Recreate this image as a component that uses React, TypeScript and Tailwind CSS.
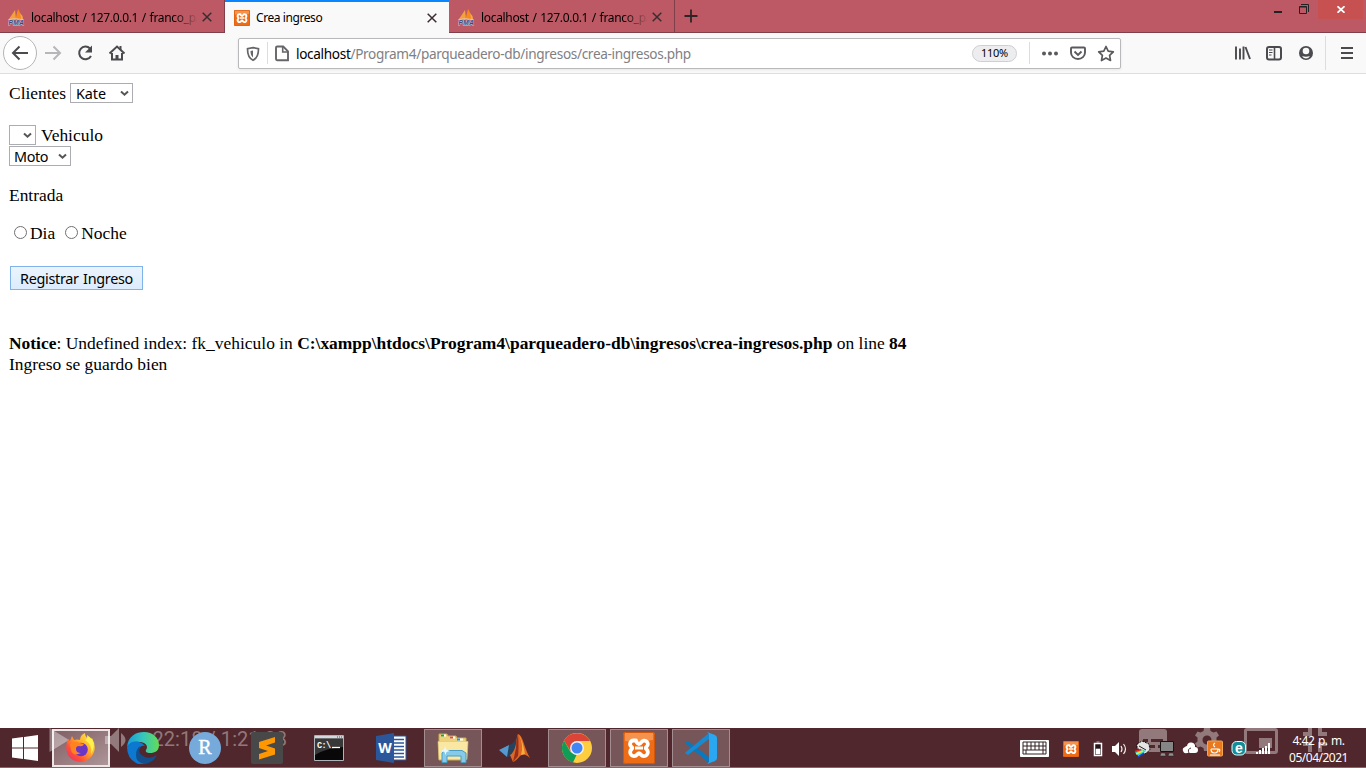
import React from "react";

const ui = "font-['Noto_Sans','Open_Sans',sans-serif]";

function Sail() {
  return (
    <svg width="17" height="18" viewBox="0 0 17 18" className="shrink-0">
      <path d="M1 11 7 2l1 9z" fill="#f5a040" />
      <path d="M7.500 11 10 1q3 4 3 10z" fill="#f88a18" />
      <path d="M12 5q3 2.500 3 6h-2z" fill="#f9a94c" />
      <path d="M.5 11.500q7-1.500 15 .2" stroke="#e9c9b4" fill="none" />
      <text x=".5" y="17" fontSize="6.500" fontWeight="bold" fontStyle="italic" textLength="15.500" fill="#3d4780" stroke="#cfc6d8" strokeWidth="1" paintOrder="stroke" fontFamily="Liberation Sans, sans-serif">PMA</text>
    </svg>
  );
}

function Xampp({ size }: { size: number }) {
  return (
    <svg width={size} height={size} viewBox="0 0 32 32" className="shrink-0">
      <rect width="32" height="32" rx="2.500" fill="#ef6c16" />
      <path d="M2 1h28v7q-14 3-28 1z" fill="#f4924e" />
      <rect x=".5" y=".5" width="31" height="31" rx="2" fill="none" stroke="#cf570b" />
      <path d="M13 8.500H10.500a3.500 3.500 0 0 0-2 6.300q1.500 1.200 0 2.500a3.900 3.900 0 1 0 5.500 5.500q2-3.500 4 0a3.900 3.900 0 1 0 5.500-5.500q-1.500-1.300 0-2.500a3.500 3.500 0 1 0-5-4.800q-2.500 4-5 0Q13 9 13 8.500z" fill="#ef6c16" stroke="#fff" strokeWidth="3.800" strokeLinejoin="round" />
      <path d="M12 16h8" stroke="#fff" strokeWidth="3" />
    </svg>
  );
}

function Close() {
  return (
    <svg width="10" height="10" viewBox="0 0 10 10" className="shrink-0">
      <path d="m.7.7 8.600 8.600M9.300.7.7 9.300" stroke="#3b2c31" strokeWidth="1.500" />
    </svg>
  );
}

function Tab({ title, active }: { title: string; active?: boolean }) {
  return (
    <div className={"flex h-[33px] shrink-0 items-center " + (active ? "w-[224px] border-t-2 border-[#0a84ff] bg-[#f9f9fa] pl-[9px]" : "w-[226px] border-r border-b border-[#80404a] pt-[2px] pl-[9px] first:w-[225px] first:pl-[8px]")}>
      {active ? <Xampp size={16} /> : <Sail />}
      <div className={"ml-[6px] w-[166px] overflow-hidden whitespace-nowrap text-[12px] leading-[18px] text-black " + (active ? "tracking-[-0.42px]" : "pt-px tracking-[-0.33px] [word-spacing:0.9px] [mask-image:linear-gradient(to_right,black_142px,transparent_167px)]")}>{title}</div>
      <span className="ml-[5px]"><Close /></span>
    </div>
  );
}

function TabBar() {
  return (
    <div className={"flex h-[33px] border-b border-[#80404a] bg-[#bc5964] " + ui}>
      <Tab title="localhost / 127.0.0.1 / franco_parqueadero" />
      <Tab title="Crea ingreso" active />
      <Tab title="localhost / 127.0.0.1 / franco_parqueadero" />
      <svg width="32" height="32" viewBox="0 0 32 32"><path d="M16 9.500v13M9.500 16h13" stroke="#2d2428" strokeWidth="1.800" /></svg>
      <div className="ml-auto flex">
        <svg width="53" height="20" viewBox="0 0 53 20" fill="none" stroke="#242124"><path d="M9 12h8" strokeWidth="2" /><path d="M34.500 6.500h7v7h-7zM34.500 7h7" /><path d="M36 4.500h7.500V12" /></svg>
        <div className="flex h-[19px] w-[45px] items-center justify-center bg-[#c75050]">
          <svg width="8" height="7" viewBox="0 0 8 7"><path d="m.5.2 7 6.600m0-6.600-7 6.600" stroke="#fff" strokeWidth="1.700" /></svg>
        </div>
        <span className="w-[3px]" />
      </div>
    </div>
  );
}

function Toolbar() {
  return (
    <div className={"flex h-[41px] items-center border-b border-[#dedee0] bg-[#f9f9fa] " + ui}>
      <svg width="238" height="40" viewBox="0 0 238 40" fill="none" stroke="#4b4b4f" strokeWidth="2">
        <circle cx="20" cy="20" r="16.500" fill="#fff" stroke="#b5b5b7" strokeWidth="1" />
        <path d="M28 20H13m6.500-6.500L13 20l6.500 6.500" />
        <path d="M45 20h15m-6.500-6.500L60 20l-6.500 6.500" stroke="#b7b7b9" />
        <path d="M90 15.500A6.300 6.300 0 1 0 91 23" /><path d="M92 12.500v7h-7z" fill="#4b4b4f" stroke="none" />
        <path d="m109.500 20.500 7.500-7 7.500 7" /><path d="M112 20v6.500h10V20" /><path d="M120.500 13v4" /><path d="M117 27v-5" strokeWidth="3" />
      </svg>
      <div className="flex h-[31px] w-[883px] items-center rounded-[2px] border border-[#b9b9bb] bg-white shadow-[0_1px_3px_rgba(0,0,0,0.08)]">
        <svg width="57" height="29" viewBox="0 0 57 29" fill="none" stroke="#66666a" strokeWidth="1.700">
          <path d="m14 8.600 5.500 1.100q0 9-5.500 11.500Q8.500 18.700 8.500 9.700z" /><path d="M14 11.500v7q-2.500-2-2.500-6.500z" fill="#66666a" stroke="none" />
          <path d="M28.500 3v22" stroke="#dddddf" strokeWidth="1" />
          <path d="M38.200 7.500h6l4.800 4.800v8.900H38.200q-1.200 0-1.200-1.200V8.700q0-1.200 1.200-1.200z" strokeWidth="1.900" /><path d="M43.700 8v5H49" strokeWidth="1.600" />
        </svg>
        <span className="whitespace-nowrap text-[13.6px] leading-[20px] tracking-[-0.33px] pt-[2px] text-[#808084]"><span className="text-black">localhost</span>/Program4/parqueadero-db/ingresos/crea-ingresos.php</span>
        <div className="ml-auto flex h-[17px] w-[45px] items-center justify-center rounded-full border border-[#cfcfd1] bg-[#ededef] pt-px text-[11px] tracking-[-0.3px] text-black">110%</div>
        <svg width="103" height="29" viewBox="0 0 103 29" fill="none" stroke="#5a5a5e" strokeWidth="1.900">
          <path d="M12.500 3v22" stroke="#dddddf" strokeWidth="1" />
          <g fill="#5a5a5e" stroke="none"><circle cx="27" cy="14.500" r="2" /><circle cx="33" cy="14.500" r="2" /><circle cx="39" cy="14.500" r="2" /></g>
          <path d="M55 8.500h12q1 0 1 1v4a7 6.500 0 0 1-14 0v-4q0-1 1-1z" /><path d="m57.500 12.500 3.500 3.500 3.500-3.500" />
          <path d="m89 7.500 2.200 4.600 5.100.7-3.700 3.600.9 5.100-4.500-2.500-4.500 2.500.9-5.100-3.700-3.600 5.100-.7z" strokeLinejoin="round" strokeWidth="1.700" />
        </svg>
      </div>
      <svg className="ml-auto" width="135" height="40" viewBox="0 0 135 40" fill="none" stroke="#4b4b4f" strokeWidth="2">
        <path d="M5 13.500v13M9 15.500v11M12.500 13.500v13M14.500 14l4.500 12" strokeWidth="1.900" />
        <rect x="36" y="14" width="14" height="12.500" rx="2" /><path d="M43.500 14v12" strokeWidth="1.600" /><path d="M38 17h3.500M38 19.500h3.500M38 22h2.500" strokeWidth="1" />
        <circle cx="75" cy="20" r="7" fill="#4b4b4f" stroke="none" /><circle cx="75" cy="18" r="3.300" fill="#f9f9fa" stroke="none" /><path d="M71 23q4 1.500 8 0-1.500 2.500-4 2.500T71 23z" fill="#f9f9fa" stroke="none" />
        <path d="M94.500 3v34" stroke="#dddddf" strokeWidth="1" />
        <path d="M110 15h12M110 20h12M110 25h12" />
      </svg>
    </div>
  );
}

function Select({ label, className }: { label: string; className: string }) {
  return (
    <span className={"flex h-[20px] items-center justify-between border border-[#abadb3] bg-white pr-[3px] text-[14.4px] leading-[18px] text-black " + ui + " " + className}>
      <span className="pt-px">{label}</span>
      <svg width="9" height="7" viewBox="0 0 9 7"><path d="m1 1.500 3.500 3.200L8 1.500" fill="none" stroke="#555" strokeWidth="2" /></svg>
    </span>
  );
}

function Radio({ label }: { label: string }) {
  return (
    <label className="flex items-center">
      <span className="mr-[3px] mb-[2px] h-[13px] w-[13px] rounded-full border border-[#707070] bg-white" />
      {label}
    </label>
  );
}

function Page() {
  return (
    <main className="flex h-[654px] flex-col items-start bg-white pl-[9px] font-['Liberation_Serif',serif] text-[17.45px] leading-[21px] text-black">
      <div className="mt-[9px] flex h-[20px] items-center"><span className="w-[61px]">Clientes</span><Select label="Kate" className="w-[63px] pl-[5px] tracking-[-0.1px]" /></div>
      <div className="mt-[22px] flex h-[20px] items-center gap-[5px]"><Select label="" className="w-[27px]" />Vehiculo</div>
      <Select label="Moto" className="mt-[1px] w-[62px] pl-[4px] tracking-[-0.4px]" />
      <p className="mt-[19px]">Entrada</p>
      <div className="mt-[17px] ml-[5px] flex gap-[10px]"><Radio label="Dia" /><Radio label="Noche" /></div>
      <button className={"mt-[22px] ml-px h-[24px] w-[133px] border border-[#7eb4ea] bg-linear-to-b from-[#ebf4fc] to-[#dcecfc] pt-px text-[14.4px] leading-[20px] tracking-[-0.3px] whitespace-nowrap [word-spacing:1px] " + ui}>Registrar Ingreso</button>
      <p className="mt-[43px] whitespace-nowrap"><b>Notice</b>: Undefined index: fk_vehiculo in <b>C:\xampp\htdocs\Program4\parqueadero-db\ingresos\crea-ingresos.php</b> on line <b>84</b></p>
      <p>Ingreso se guardo bien</p>
    </main>
  );
}

const svg = { width: 32, height: 32, viewBox: "0 0 32 32" };
const Firefox = () => (
  <svg {...svg}>
    <defs>
      <linearGradient id="fx" x1="1" y1="0" x2="0" y2="1"><stop stopColor="#fff04b" /><stop offset=".38" stopColor="#ffb52c" /><stop offset=".7" stopColor="#ff5038" /><stop offset="1" stopColor="#e82478" /></linearGradient>
    </defs>
    <path d="M2 10 3 7l2 2 2-5 2 4q4-1 6 0 0-5 5-7 0 4 4 6l2 1 1-2q6 11-1 19-8 8-18 3Q-1 22 2 10z" fill="url(#fx)" />
    <circle cx="16" cy="17.500" r="6.800" fill="#6b35c6" />
    <path d="M5 12q5-4 10-1l4 1q-1 3-5 2-3 0-3 3 0 4 5 4-8 4-10-3z" fill="#ff8420" />
    <path d="M20 8q8 5 6 14 5-8 1-15l-5-4q1 4-2 5z" fill="#fff04b" />
  </svg>
);
const Edge = () => (
  <svg {...svg}>
    <defs><linearGradient id="ed"><stop stopColor="#189bd8" /><stop offset=".5" stopColor="#36c6bc" /><stop offset="1" stopColor="#63dc56" /></linearGradient></defs>
    <path d="M0 15C1 4 9 0 17 0c9 0 15 6 15 13 0 6-4 8-9 8-3 0-5-1-4-3 3-4-1-8-6-8Q4 9 0 15z" fill="url(#ed)" />
    <path d="M0 15Q4 8 12 10q4 1 6 4-5-1-6 4-1 7 5 10l6 1q-7 5-14 2Q0 26 0 15z" fill="#0c78cf" />
    <path d="M13 14q-3 8 5 11 6 2 12-2-4 8-12 9-9-1-9-9 0-6 4-9z" fill="#124f8c" />
  </svg>
);
const RStudio = () => <svg {...svg}><circle cx="16" cy="16" r="16" fill="#75aadb" /><text x="16" y="22" fontSize="20" textAnchor="middle" fill="#fff" stroke="#fff" strokeWidth=".4" fontFamily="Liberation Serif, serif">R</text></svg>;
const Sublime = () => <svg {...svg}><rect width="32" height="32" rx="2" fill="#484848" /><path d="m8 10 16-5v5.500l-9 3 9 3v6L8 27.500V22l9-3-9-3z" fill="#ff9800" /></svg>;
const Cmd = () => <svg width="30" height="26" viewBox="0 0 30 26"><path d="M.5.5h29v25H.5z" fill="#080808" stroke="#aeb3b9" /><path d="M1 1h28v2.500H1z" fill="#d5d8dd" /><path d="M1 4h28v8Q12 13 1 20z" fill="#383838" /><path d="M23 2h1m1 0h1m1 0h1" stroke="#456" /><text x="3" y="12.500" fontSize="8.500" fontWeight="bold" textLength="14" fill="#fff" fontFamily="Liberation Mono, monospace">C:\</text><path d="M18 12.500h8" stroke="#fff" strokeWidth="1.300" /></svg>;
const Word = () => <svg {...svg}><path d="M17 4h14v24H17z" fill="#fff" stroke="#2b579a" /><path d="M19 7.500h10M19 11h10M19 14.500h10M19 18h10M19 21.500h10M19 25h10" stroke="#2b579a" strokeWidth="1.500" /><path d="m1 4 18-3v30L1 28z" fill="#2b579a" /><text x="10" y="21" fontSize="14" fontWeight="bold" textAnchor="middle" fill="#fff" fontFamily="Open Sans, sans-serif">W</text></svg>;
const Explorer = () => <svg {...svg}><path d="M2 2h8l1 2h8l1 2h9v22H2z" fill="#ecd27b" stroke="#c9a950" /><path d="M4 3.500h5M13 5.500h5M21 7.500h5" stroke="#fff" strokeWidth="2" /><path d="M4 3.500h3" stroke="#19aa2b" strokeWidth="2" /><path d="M13 5.500h3" stroke="#d8503b" strokeWidth="2" /><path d="M20 7.500h3" stroke="#2795e6" strokeWidth="2" /><path d="M1 9.500h30l-1 18H2z" fill="#f9e7a2" stroke="#dcc27a" strokeWidth=".6" /><path d="M5 30.500V21l3-2.500h17l4 2.500v9.500h-5V24H10v6.500z" fill="#86cae9" stroke="#4c9dc4" /><path d="m8 14 1.200 3.500L13 19l-3.500 1-1 3-1-3L4 19l3-1.500z" fill="#e7f8ff" /></svg>;
const Matlab = () => <svg {...svg}><path d="M0 18 10 13l5 5-7 7z" fill="#5599ce" /><path d="M10 13q5-1 9-10l-2 14-5 7-4 1z" fill="#25435e" /><path d="M19 2q3 0 6 10 3 9 6 14-6-6-10-2-4 5-7 6l-3-7q4-2 6-11 1-9 2-10z" fill="#e06825" /><path d="M19 2q-2 6-2 14l-3 14 5-6q1-8 0-22z" fill="#982f1d" /><path d="M20 3q5 10 2 20l4-1Q24 9 20 3z" fill="#f4ac3d" /></svg>;
const Chrome = () => <svg {...svg}><circle cx="16" cy="16" r="15" fill="#ffcd40" /><path d="M3 8.500A15 15 0 0 1 29 9H16l-6 11z" fill="#db4437" /><path d="M3 8.500 9.500 20l6 3-3.500 7.500A15 15 0 0 1 3 8.500z" fill="#0f9d58" /><circle cx="16" cy="16" r="7" fill="#f1f1f1" /><circle cx="16" cy="16" r="5.500" fill="#4285f4" /></svg>;
const Code = () => <svg {...svg}><path d="m0 11 3-2 21 16v6L1 12z" fill="#0879be" /><path d="m0 21 3 2L24 7V1L1 20z" fill="#168bd2" /><path d="m22 0 8 3q2 1 2 3v20q0 2-2 3l-8 3 2-2V2z" fill="#2aa7f1" /></svg>;

function Task({ children, state }: { children: React.ReactNode; state?: "active" | "open" }) {
  const look = state === "active" ? "border-2 border-[#eee5e7] bg-linear-to-br from-[#806065] to-[#ad9598]" : state === "open" ? "border border-[#a28d90] bg-[#77565a]" : "border border-transparent";
  return <div className={"mr-[4px] flex h-[38px] w-[58px] shrink-0 items-center justify-center " + look}><span className="relative z-20">{children}</span></div>;
}

function Tray() {
  return (
    <div className="relative z-20 mt-[10px] ml-auto flex h-[20px] w-[252px] shrink-0">
      <svg width="252" height="20" viewBox="1020 739 252 20">
        <path d="M1020.500 740.500h28v16h-28z" fill="#fff" stroke="#fff" /><path d="M1023 742h23v12h-23z" fill="#fff" stroke="#332024" strokeWidth="1" />
        <path d="M1023 746h23M1023 750h23M1027 742v8M1031 742v8M1035 742v8M1039 742v8M1043 742v8M1026 750v4M1043 750v4" stroke="#332024" />
        <path d="M1094.500 743.500h7v12h-7z" fill="#24151a" stroke="#fff" strokeWidth="1.500" /><path d="M1096.500 742h3M1096 749h4v5h-4z" fill="#fff" stroke="#fff" strokeWidth=".6" />
        <path d="M1112 746h3l4-4v14l-4-4h-3z" fill="#fff" /><path d="M1121 746q2 3 0 6M1123.500 744q4 5 0 10" fill="none" stroke="#eee" strokeWidth="1.200" />
        <path d="m1137 744 5-3 7 3 1 6-5 4-8-6z" fill="#e4e4e4" stroke="#111" strokeDasharray="2 1" /><path d="m1139 746 7 4" stroke="#222" /><path d="m1135 752 6-3 5 2-7 6z" fill="#26d8dd" /><path d="m1135 751.500 6-2" stroke="#ef2020" strokeWidth="1.500" /><path d="m1136 754 7-3" stroke="#f1e832" strokeWidth="1.500" /><path d="m1138 757 6-4" stroke="#1d3bdf" strokeWidth="1.500" />
        <path d="M1160.500 741.500h13v10h-13z" fill="#858585" stroke="#171214" /><path d="M1161 753h4l1 3h-6zM1169 753h4l1 3h-6z" fill="#929292" stroke="#222" strokeWidth=".5" />
        <path d="M1187 753h8a3 3 0 0 0 0-6 4 4 0 0 0-8-1 3 3 0 0 0-2 1 3 3 0 0 0 2 6z" fill="#fff" /><path d="M1189 753q-2-4 2-5" stroke="#56353b" fill="none" />
        <rect x="1207.500" y="741" width="15" height="15" rx="1" fill="#ea791d" stroke="#f4a54e" /><path d="M1211 749h7q0 4-3.500 4t-3.500-4m-1 6h10m-2-6q3 0 1 3m-4-9q-3 2 0 4" fill="none" stroke="#fff" strokeWidth="1.200" />
        <rect x="1232" y="741.500" width="13.500" height="13.500" rx="4.500" fill="#148d9b" stroke="#e4ffff" /><text x="1238.800" y="752.500" textAnchor="middle" fontSize="14" fontWeight="bold" fill="#fff" fontFamily="Liberation Sans, sans-serif">e</text>
        <path d="M1256 752h2v2h-2zM1259 750h2v4h-2zM1262 748h2v6h-2zM1265 746h2v8h-2zM1268 743h2v11h-2z" fill="#fff" />
      </svg>
      <span className="absolute top-[2px] left-[43px]"><Xampp size={16} /></span>
    </div>
  );
}

function PlayerOverlay() {
  return (
    <svg className="absolute top-0 left-0 z-10" width="1366" height="40" viewBox="0 728 1366 40" fill="#fff" fillOpacity=".38">
      <path d="m49.500 728 19.500 12-19.500 12zM105 736h6l8-8v24l-8-8h-6zM121 733q9 7 0 14z" />
      <text x="152.500" y="746" fontSize="20" textLength="134.500" fontFamily="Roboto, sans-serif">22:18 / 1:21:28</text>
      <path fillRule="evenodd" d="M1142 729h22q3 0 3 3v20h-25q-3 0-3-3v-17q0-3 3-3zm1 10v3h5v-3zm8 0v3h12v-3zm-8 6v3h12v-3zm15 0v3h5v-3z" />
      <path fillRule="evenodd" d="m1204 728-.5 3-3 1.500-3-1-2.500 4 2.500 2v4l-2.500 2 2.500 4 3-1 3 1.500.5 3h6l.5-3 3-1.500 3 1 2.500-4-2.500-2v-4l2.500-2-2.500-4-3 1-3-1.500-.5-3zm3 7.500a4.500 4.500 0 1 1 0 9 4.500 4.500 0 0 1 0-9z" />
      <path fillRule="evenodd" d="M1247 728h28q3 0 3 3v20q0 3-3 3h-28q-3 0-3-3v-20q0-3 3-3zm0 3v20h28v-20zm12 7h13v10h-13z" />
      <path d="M1308 728h4v8h-9v-4h5zM1318 728h4v4h5v4h-9zM1303 742h9v10h-4v-6h-5zM1318 742h9v4h-5v6h-4z" />
    </svg>
  );
}

function Taskbar() {
  return (
    <footer className="relative flex h-[40px] border-b border-[#806872] bg-[#50272c] pt-px">
      <div className="flex w-[52px] shrink-0 items-center pl-[12px]">
        <svg width="26" height="26" viewBox="0 0 26 26"><path d="m0 3.500 11-1.500v10.500H0zM12 1.900 26 0v12.500H12zM0 13.500h11V24L0 22.500zM12 13.500h14V26l-14-1.900z" fill="#fff" /></svg>
      </div>
      <Task state="active"><Firefox /></Task>
      <Task><Edge /></Task>
      <Task><RStudio /></Task>
      <Task><Sublime /></Task>
      <Task><Cmd /></Task>
      <Task><Word /></Task>
      <Task state="open"><Explorer /></Task>
      <Task><Matlab /></Task>
      <Task state="open"><Chrome /></Task>
      <Task state="open"><Xampp size={32} /></Task>
      <Task state="open"><Code /></Task>
      <Tray />
      <div className={"relative z-20 mt-[3px] w-[94px] shrink-0 pr-[1px] text-center text-[12px] leading-[17px] tracking-[-0.5px] text-white [word-spacing:1px] " + ui}><div>4:42 p. m.</div><div>05/04/2021</div></div>
      <PlayerOverlay />
    </footer>
  );
}

export default function App() {
  return (
    <div className="h-[768px] w-[1366px] overflow-hidden bg-white">
      <TabBar />
      <Toolbar />
      <Page />
      <Taskbar />
    </div>
  );
}
